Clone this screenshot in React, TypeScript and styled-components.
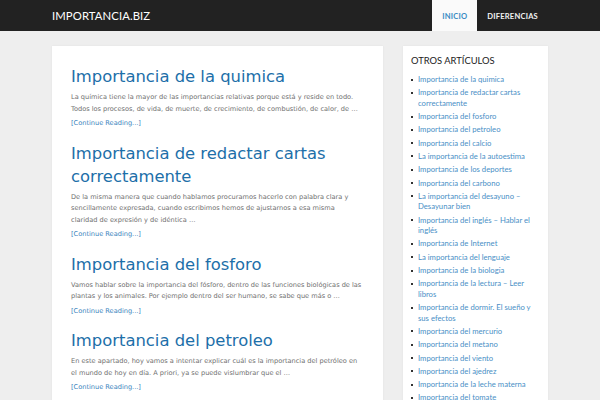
import React from "react";
import styled, { createGlobalStyle } from "styled-components";

const GlobalStyle = createGlobalStyle`
  html, body {
    margin: 0;
    padding: 0;
    background: #eeeeee;
  }
  body {
    font-family: "DejaVu Sans", Verdana, sans-serif;
    overflow: hidden;
  }
`;

const Header = styled.header`
  background: #222222;
  height: 31px;
`;

const HeaderInner = styled.div`
  width: 496px;
  margin: 0 auto;
  height: 100%;
  display: flex;
  align-items: center;
  justify-content: space-between;
`;

const Logo = styled.a`
  font-family: Lato, "Open Sans", sans-serif;
  font-size: 11.3px;
  color: #ffffff;
  text-decoration: none;
  letter-spacing: 0.1px;
`;

const Nav = styled.nav`
  display: flex;
  height: 100%;
`;

const NavItem = styled.a<{ $active?: boolean }>`
  display: flex;
  align-items: center;
  padding: 0 10px;
  height: 100%;
  font-family: Lato, "Open Sans", sans-serif;
  font-size: 7.6px;
  font-weight: 700;
  letter-spacing: 0.2px;
  text-decoration: none;
  background: ${(p) => (p.$active ? "#fafafa" : "transparent")};
  color: ${(p) => (p.$active ? "#3b8cc4" : "#f2f2f2")};
`;

const Container = styled.div`
  width: 496px;
  margin: 15px auto 0;
  display: flex;
  align-items: flex-start;
  gap: 20px;
`;

const Card = styled.div`
  background: #ffffff;
  box-shadow: 0 0 2px rgba(0, 0, 0, 0.06);
`;

const Main = styled(Card)`
  width: 331px;
  padding: 19px 20px 0 19px;
  box-sizing: border-box;
`;

const Post = styled.article`
  margin-bottom: 12px;
`;

const PostTitle = styled.h2`
  margin: 0 0 4px;
  font-family: "DejaVu Sans", Verdana, sans-serif;
  font-weight: 400;
  font-size: 16.4px;
  line-height: 23px;
  color: #1d6fa9;
`;

const Excerpt = styled.p`
  margin: 0 0 3px;
  font-size: 6.6px;
  line-height: 11.5px;
  color: #707070;
`;

const More = styled.a`
  display: block;
  font-size: 6.6px;
  line-height: 11.5px;
  color: #3a84bd;
  text-decoration: none;
`;

const Sidebar = styled(Card)`
  width: 145px;
  padding: 8px 8px 0 8px;
  box-sizing: border-box;
`;

const WidgetTitle = styled.h3`
  margin: 0 0 6px;
  font-family: Lato, "Open Sans", sans-serif;
  font-weight: 400;
  font-size: 9.4px;
  line-height: 14px;
  color: #222222;
`;

const List = styled.ul`
  list-style: none;
  margin: 0;
  padding: 0;
`;

const ListItem = styled.li`
  position: relative;
  padding-left: 7px;
  margin-bottom: 2.8px;
  font-family: Lato, "Open Sans", sans-serif;
  font-size: 7.7px;
  line-height: 10.5px;
  &::before {
    content: "";
    position: absolute;
    left: 0;
    top: 4.5px;
    width: 2px;
    height: 2px;
    background: #333;
  }
  a {
    color: #4a8fc6;
    text-decoration: none;
  }
`;

const posts = [
  {
    title: "Importancia de la quimica",
    text: "La química tiene la mayor de las importancias relativas porque está y reside en todo. Todos los procesos, de vida, de muerte, de crecimiento, de combustión, de calor, de …",
  },
  {
    title: "Importancia de redactar cartas correctamente",
    text: "De la misma manera que cuando hablamos procuramos hacerlo con palabra clara y sencillamente expresada, cuando escribimos hemos de ajustarnos a esa misma claridad de expresión y de idéntica …",
  },
  {
    title: "Importancia del fosforo",
    text: "Vamos hablar sobre la importancia del fósforo, dentro de las funciones biológicas de las plantas y los animales. Por ejemplo dentro del ser humano, se sabe que más o …",
  },
  {
    title: "Importancia del petroleo",
    text: "En este apartado, hoy vamos a intentar explicar cuál es la importancia del petróleo en el mundo de hoy en día. A priori, ya se puede vislumbrar que el …",
  },
];

const articles = [
  "Importancia de la quimica",
  "Importancia de redactar cartas correctamente",
  "Importancia del fosforo",
  "Importancia del petroleo",
  "Importancia del calcio",
  "La importancia de la autoestima",
  "Importancia de los deportes",
  "Importancia del carbono",
  "La importancia del desayuno – Desayunar bien",
  "Importancia del inglés – Hablar el inglés",
  "Importancia de Internet",
  "La importancia del lenguaje",
  "Importancia de la biologia",
  "Importancia de la lectura – Leer libros",
  "Importancia de dormir. El sueño y sus efectos",
  "Importancia del mercurio",
  "Importancia del metano",
  "Importancia del viento",
  "Importancia del ajedrez",
  "Importancia de la leche materna",
  "Importancia del tomate",
];

export default function App() {
  return (
    <>
      <GlobalStyle />
      <Header>
        <HeaderInner>
          <Logo href="#">IMPORTANCIA.BIZ</Logo>
          <Nav>
            <NavItem href="#" $active>
              INICIO
            </NavItem>
            <NavItem href="#">DIFERENCIAS</NavItem>
          </Nav>
        </HeaderInner>
      </Header>
      <Container>
        <Main>
          {posts.map((p) => (
            <Post key={p.title}>
              <PostTitle>{p.title}</PostTitle>
              <Excerpt>{p.text}</Excerpt>
              <More href="#">[Continue Reading...]</More>
            </Post>
          ))}
        </Main>
        <Sidebar>
          <WidgetTitle>OTROS ARTÍCULOS</WidgetTitle>
          <List>
            {articles.map((a) => (
              <ListItem key={a}>
                <a href="#">{a}</a>
              </ListItem>
            ))}
          </List>
        </Sidebar>
      </Container>
    </>
  );
}
